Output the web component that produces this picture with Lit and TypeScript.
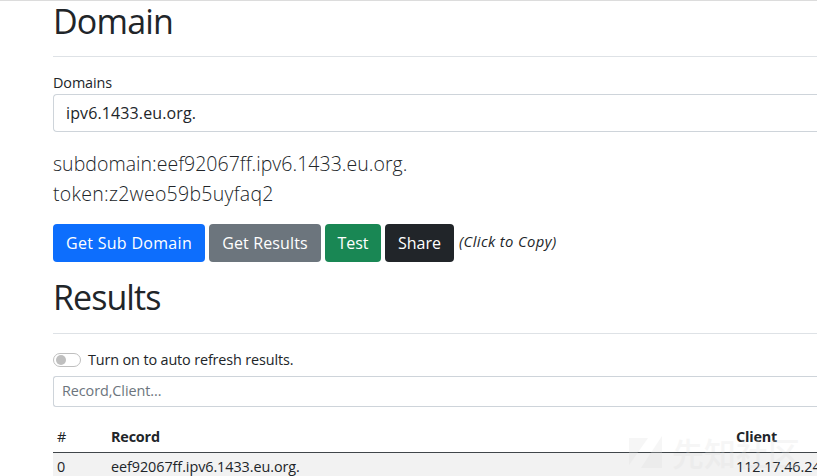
import { LitElement, html, css } from "lit";
import { customElement } from "lit/decorators.js";

@customElement("app-root")
export class AppRoot extends LitElement {
  static styles = css`
    :host { display: block; position: relative; box-sizing: border-box; height: 476px; overflow: hidden; background: #fff; border-top: 1px solid #dcdcdc; padding-left: 53px; font: 14.4px/22px "Open Sans", "Noto Sans", sans-serif; color: #212529; white-space: nowrap; }
    * { box-sizing: border-box; }
    h1 { margin: 0; font-size: 34px; line-height: 40px; font-weight: 400; letter-spacing: -0.8px; }
    .rule { height: 1px; background: #dee2e6; }
    .domain { height: 55px; }
    .results { margin-top: 13px; height: 58px; line-height: 44px; letter-spacing: -0.95px; }
    .label { height: 22px; margin-top: 15px; letter-spacing: -0.1px; }
    .select { height: 38px; border: 1px solid #ced4da; border-right: 0; border-radius: 4px 0 0 4px; padding: 0 12px; font-size: 16px; line-height: 37px; letter-spacing: 0.12px; }
    .lead { margin-top: 17px; font-size: 19.5px; line-height: 30px; font-weight: 300; }
    .sub { letter-spacing: 0.03px; }
    .token { letter-spacing: 0.27px; }
    .buttons { display: flex; gap: 4px; margin-top: 15px; height: 38px; }
    button { border: 0; border-radius: 4px; padding: 0; font: 16px/37px "Open Sans", "Noto Sans", sans-serif; color: #fff; height: 38px; }
    .primary { background: #0d6efd; width: 152px; letter-spacing: 0.3px; }
    .secondary { background: #6c757d; width: 112px; letter-spacing: 0.12px; }
    .success { background: #198754; width: 56px; }
    .dark { background: #212529; width: 69px; }
    .hint { font-size: 14.8px; font-style: italic; line-height: 35px; margin-left: 1px; letter-spacing: 0.38px; }
    .toggle { display: flex; align-items: center; gap: 7px; margin-top: 15px; height: 22px; letter-spacing: -0.13px; }
    .switch { width: 28px; height: 14px; border: 1px solid #bfbfbf; border-radius: 7px; padding: 1px 2px; }
    .knob { width: 10px; height: 10px; border-radius: 50%; background: #bfbfbf; }
    .filter { margin-top: 5px; height: 31px; border: 1px solid #ced4da; border-right: 0; border-radius: 3px 0 0 3px; padding: 0 8px; line-height: 27px; color: #6c757d; letter-spacing: -0.08px; }
    .row { display: grid; grid-template-columns: 54px 625px 1fr; padding-left: 4px; height: 30px; line-height: 27px; letter-spacing: -0.07px; }
    .head { margin-top: 15px; height: 31px; line-height: 30px; font-weight: 700; letter-spacing: -0.18px; border-bottom: 1px solid #40464a; }
    .index { font-weight: 500; }
    .body { background: #f2f2f2; }
    .mark { position: absolute; left: 628px; top: 432px; display: flex; gap: 9px; align-items: center; opacity: 0.25; color: #dcdcdc; font: 500 32px/38px "Noto Sans CJK SC", sans-serif; }
  `;
  render() {
    return html`
      <h1 class="domain">Domain</h1>
      <div class="rule"></div>
      <div class="label">Domains</div>
      <div class="select">ipv6.1433.eu.org.</div>
      <div class="lead"><span class="sub">subdomain:eef92067ff.ipv6.1433.eu.org.</span><br /><span class="token">token:z2weo59b5uyfaq2</span></div>
      <div class="buttons">
        <button class="primary">Get Sub Domain</button>
        <button class="secondary">Get Results</button>
        <button class="success">Test</button>
        <button class="dark">Share</button>
        <span class="hint">(Click to Copy)</span>
      </div>
      <h1 class="results">Results</h1>
      <div class="rule"></div>
      <div class="toggle"><div class="switch"><div class="knob"></div></div><span>Turn on to auto refresh results.</span></div>
      <div class="filter">Record,Client...</div>
      <div class="row head"><span class="index">#</span><span>Record</span><span>Client</span></div>
      <div class="row body"><span>0</span><span>eef92067ff.ipv6.1433.eu.org.</span><span>112.17.46.24</span></div>
      <div class="mark"><svg width="35" height="33" viewBox="0 0 35 33"><path d="M1 2H20L1 29Z M34 0V32H13Z" fill="currentColor" /></svg><span>先知社区</span></div>
    `;
  }
}
